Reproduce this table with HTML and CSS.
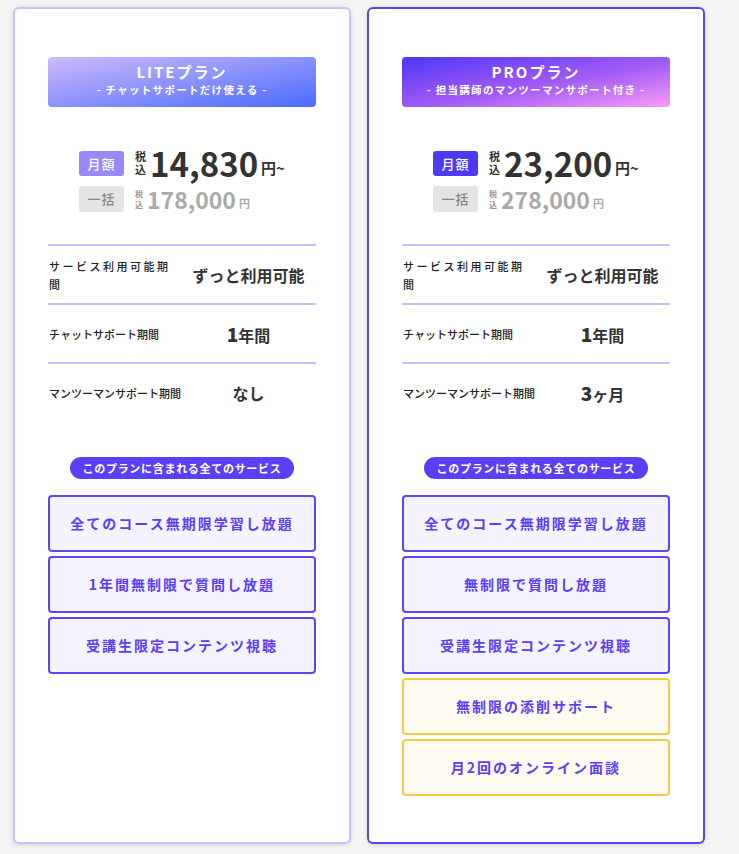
FILE: index.html
```html
<!DOCTYPE html>
<html lang="ja">
<head>
    <meta charset="UTF-8">
    <meta name="viewport" content="width=device-width, initial-scale=1.0">
    <title>料金プラン</title>
    <link rel="stylesheet" href="styles.css">
</head>
<body>

    <div class="plans">

        <!-- LITEプラン -->
        <div class="plan plan-lite">
            <div class="plan-head">
                <p class="plan-name">LITEプラン</p>
                <p class="plan-sub">- チャットサポートだけ使える -</p>
            </div>

            <div class="price">
                <div class="price-row">
                    <span class="tag tag-month">月額</span>
                    <span class="tax">税込</span>
                    <span class="amount">14,830</span>
                    <span class="yen">円~</span>
                </div>
                <div class="price-row price-lump">
                    <span class="tag tag-lump">一括</span>
                    <span class="tax">税込</span>
                    <span class="amount">178,000</span>
                    <span class="yen">円</span>
                </div>
            </div>

            <div class="terms">
                <div class="term">
                    <span class="term-label term-label-wide">サービス利用可能期間</span>
                    <span class="term-value">ずっと利用可能</span>
                </div>
                <div class="term">
                    <span class="term-label">チャットサポート期間</span>
                    <span class="term-value"><b>1</b>年間</span>
                </div>
                <div class="term">
                    <span class="term-label">マンツーマンサポート期間</span>
                    <span class="term-value">なし</span>
                </div>
            </div>

            <p class="services-label">このプランに含まれる全てのサービス</p>
            <ul class="services">
                <li>全てのコース無期限学習し放題</li>
                <li>1年間無制限で質問し放題</li>
                <li>受講生限定コンテンツ視聴</li>
            </ul>
        </div>

        <!-- PROプラン -->
        <div class="plan plan-pro">
            <div class="plan-head">
                <p class="plan-name">PROプラン</p>
                <p class="plan-sub">- 担当講師のマンツーマンサポート付き -</p>
            </div>

            <div class="price">
                <div class="price-row">
                    <span class="tag tag-month">月額</span>
                    <span class="tax">税込</span>
                    <span class="amount">23,200</span>
                    <span class="yen">円~</span>
                </div>
                <div class="price-row price-lump">
                    <span class="tag tag-lump">一括</span>
                    <span class="tax">税込</span>
                    <span class="amount">278,000</span>
                    <span class="yen">円</span>
                </div>
            </div>

            <div class="terms">
                <div class="term">
                    <span class="term-label term-label-wide">サービス利用可能期間</span>
                    <span class="term-value">ずっと利用可能</span>
                </div>
                <div class="term">
                    <span class="term-label">チャットサポート期間</span>
                    <span class="term-value"><b>1</b>年間</span>
                </div>
                <div class="term">
                    <span class="term-label">マンツーマンサポート期間</span>
                    <span class="term-value"><b>3</b>ヶ月</span>
                </div>
            </div>

            <p class="services-label">このプランに含まれる全てのサービス</p>
            <ul class="services">
                <li>全てのコース無期限学習し放題</li>
                <li>無制限で質問し放題</li>
                <li>受講生限定コンテンツ視聴</li>
                <li class="extra">無制限の添削サポート</li>
                <li class="extra">月2回のオンライン面談</li>
            </ul>
        </div>

    </div>

</body>
</html>
```

FILE: styles.css
```css
body {
    margin: 0;
    padding: 7px 13px;
    background-color: #f4f4f4;
    font-family: "Noto Sans CJK JP", "Noto Sans", sans-serif;
    color: #333;
}

p {
    margin: 0;
}

/* カード */
.plans {
    display: grid;
    grid-template-columns: 338px 338px;
    gap: 16px;
}

.plan {
    background-color: #fff;
    border: 2px solid #c9c1ff;
    border-radius: 6px;
    box-shadow: 0 1px 5px rgba(0, 0, 0, 0.12);
    padding: 48px 33px 46px;
    display: flex;
    flex-direction: column;
}

.plan-pro {
    border-color: #5b42f5;
}

/* ヘッダー */
.plan-head {
    height: 50px;
    box-sizing: border-box;
    padding-top: 5px;
    border-radius: 4px;
    color: #fff;
    text-align: center;
}

.plan-lite .plan-head {
    background: linear-gradient(to bottom right, #cdbafc, #4a6bfb);
}

.plan-pro .plan-head {
    background: linear-gradient(to bottom right, #4f36f5, #a35cf6 55%, #f89bf6);
}

.plan-name {
    font-size: 15px;
    font-weight: bold;
    letter-spacing: 2px;
    line-height: 20px;
}

.plan-sub {
    font-size: 10.5px;
    font-weight: bold;
    letter-spacing: 1.3px;
    line-height: 16px;
}

/* 料金 */
.price {
    align-self: center;
    margin-top: 40px;
}

.price-row {
    display: flex;
    align-items: center;
    height: 32px;
}

.price-lump {
    height: 26px;
    margin-top: 7px;
}

.tag {
    width: 45px;
    height: 25px;
    border-radius: 3px;
    font-size: 13px;
    font-weight: 500;
    letter-spacing: 1px;
    line-height: 25px;
    text-align: center;
    margin-right: 11px;
}

.tag-month {
    color: #fff;
    background-color: #9b88f7;
}

.plan-pro .tag-month {
    background-color: #4e3af2;
}

.tag-lump {
    color: #888;
    background-color: #e4e4e4;
    height: 26px;
    line-height: 26px;
}

/* 税込は1文字ずつ縦に並べる */
.tax {
    width: 1em;
    font-size: 11px;
    font-weight: bold;
    line-height: 13px;
    margin-right: 4px;
    word-break: break-all;
}

.amount {
    font-size: 33px;
    font-weight: bold;
    line-height: 32px;
}

.yen {
    font-size: 15px;
    font-weight: bold;
    align-self: flex-end;
    margin-left: 3px;
    line-height: 22px;
}

.price-lump .tax {
    font-size: 8px;
    line-height: 11px;
    color: #999;
    margin-right: 4px;
}

.price-lump .amount {
    font-size: 23px;
    line-height: 26px;
    color: #aaa;
}

.price-lump .yen {
    font-size: 11px;
    color: #aaa;
    line-height: 18px;
}

/* 期間 */
.terms {
    margin-top: 32px;
}

.term {
    display: grid;
    grid-template-columns: 133px 1fr;
    align-items: center;
    height: 57px;
    border-top: 2px solid #c7bfff;
}

.term-label {
    font-size: 11px;
    font-weight: 500;
    line-height: 18px;
    color: #222;
    padding-left: 1px;
}

.term-label-wide {
    letter-spacing: 2.5px;
}

.term-value {
    text-align: center;
    font-size: 16px;
    font-weight: bold;
    color: #333;
}

.term-value b {
    font-size: 19px;
}

/* サービス */
.services-label {
    align-self: center;
    margin-top: 36px;
    background-color: #5a3ff6;
    color: #fff;
    font-size: 11px;
    font-weight: bold;
    letter-spacing: 0.7px;
    line-height: 22px;
    padding: 0 13px;
    border-radius: 11px;
}

.services {
    list-style: none;
    margin: 16px 0 0;
    padding: 0;
    display: flex;
    flex-direction: column;
    gap: 4px;
}

.services li {
    height: 53px;
    border: 2px solid #5d47f3;
    border-radius: 4px;
    background-color: #f5f3ff;
    color: #5a3ff6;
    font-size: 14px;
    font-weight: bold;
    letter-spacing: 2px;
    line-height: 53px;
    text-align: center;
}

.services li.extra {
    border-color: #fbca45;
    background-color: #fffbf1;
}
```
